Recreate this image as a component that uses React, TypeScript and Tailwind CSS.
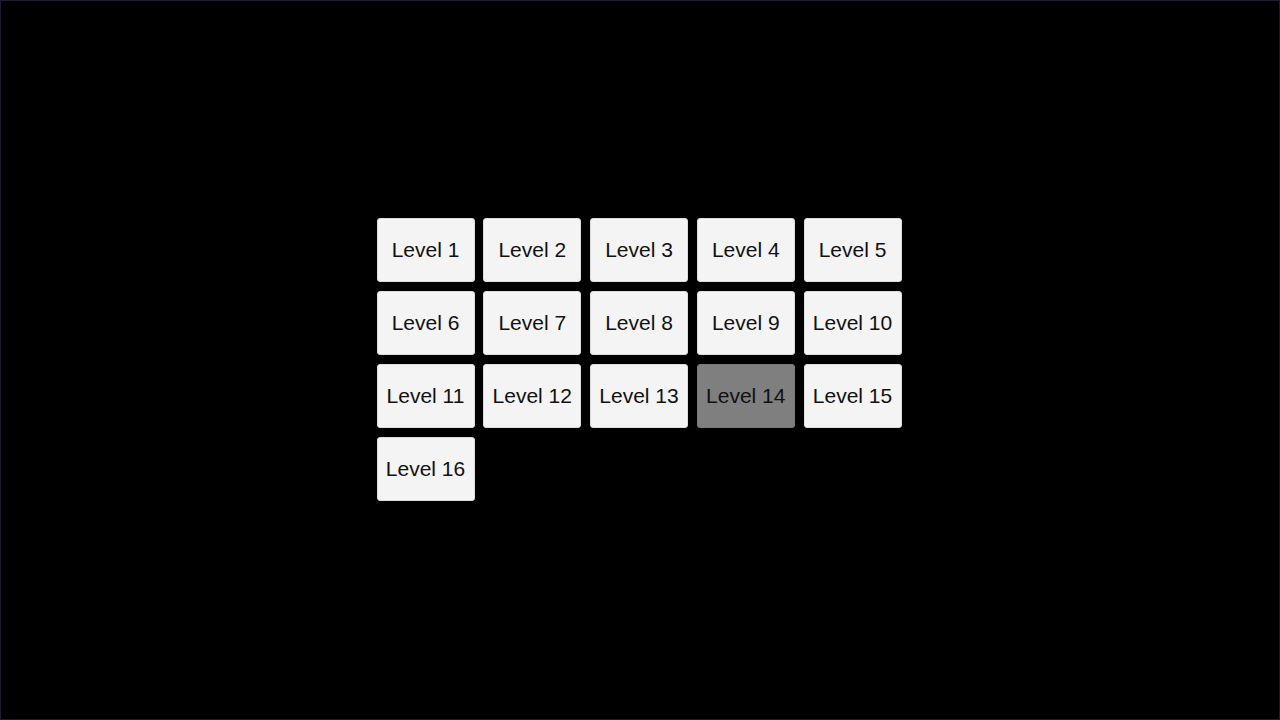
const levels = Array.from({ length: 16 }, (_, i) => i + 1);
const selected = 14;

export default function App() {
  return (
    <div
      className="w-[1280px] h-[720px] bg-black border border-[#1c1c2e] flex items-center justify-center"
      style={{ fontFamily: '"Liberation Sans", Arial, sans-serif' }}
    >
      <div className="grid grid-cols-[repeat(5,98px)] gap-x-[8.75px] gap-y-[9px] mr-[2px] mb-[2px]">
        {levels.map((n) => (
          <button
            key={n}
            className={
              "h-[64px] rounded-[3px] border text-[21px] text-[#111111] flex items-center justify-center " +
              (n === selected ? "bg-[#7f7f7f] border-[#7a7a7a]" : "bg-[#f4f4f4] border-[#dcdcdc]")
            }
          >
            Level {n}
          </button>
        ))}
      </div>
    </div>
  );
}
